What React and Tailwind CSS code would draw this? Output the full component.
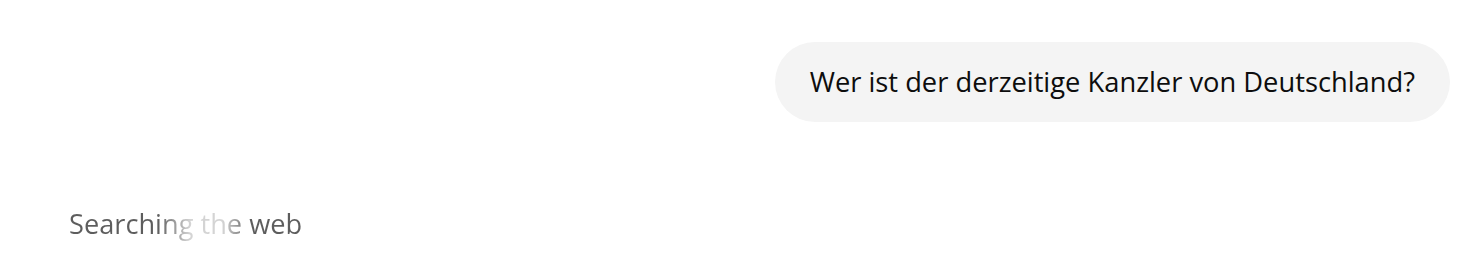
export default function App() {
  return (
    <main
      className="min-h-screen w-full bg-white"
      style={{ fontFamily: '"Open Sans", "Noto Sans", sans-serif' }}
    >
      <div className="flex justify-end pt-[42px] pr-[21px]">
        <div className="flex h-[80px] items-center rounded-full bg-[#f4f4f4] px-[35px] text-[27.3px] leading-[36px] text-[#0d0d0d]">
          Wer ist der derzeitige Kanzler von Deutschland?
        </div>
      </div>
      <div className="pl-[69px] pt-[84px]">
        <span className="bg-[linear-gradient(90deg,#5d5d5d_0%,#5d5d5d_38%,#d4d4d4_52%,#d4d4d4_66%,#5d5d5d_78%,#5d5d5d_100%)] bg-clip-text text-[27.2px] leading-[36px] text-transparent">
          Searching the web
        </span>
      </div>
    </main>
  );
}
